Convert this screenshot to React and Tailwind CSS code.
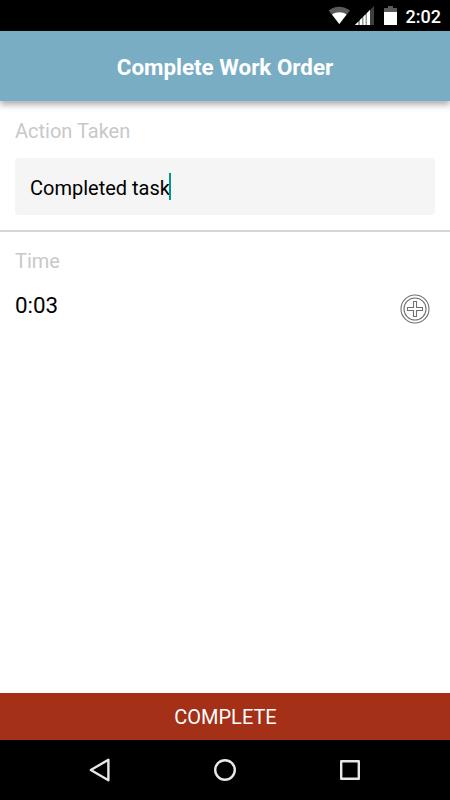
function StatusBar() {
  return (
    <div className="flex h-[31px] shrink-0 items-center bg-black pl-[328px] pr-[10px]">
      <svg width="22" height="31" viewBox="0 0 22 31" className="shrink-0">
        <path d="M0.6 10.5C6.5 5.4 15.5 5.4 22 10.5L11.3 24Z" fill="#5a5a5a" />
        <path d="M4 14.6C8 11.4 14.6 11.4 18.6 14.6L11.3 24Z" fill="#fff" />
      </svg>
      <svg width="20" height="31" viewBox="0 0 20 31" className="ml-[5px] shrink-0">
        <path d="M0 25L19 6V25Z" fill="#3f3f3f" />
        <path d="M0 25L15 10V25Z" fill="#999" />
        <path d="M0 25L3 22V25ZM5 20L7 18V25H5ZM8.5 16.5L10.5 14.5V25H8.5ZM12 13L15 10V25H12Z" fill="#fff" />
      </svg>
      <svg width="13" height="31" viewBox="0 0 13 31" className="ml-[9px] shrink-0">
        <path d="M4 6H9V8H13V12H0V8H4Z" fill="#5a5a5a" />
        <path d="M0 12H13V25H0Z" fill="#fff" />
      </svg>
      <span className="ml-[8.5px] mt-[2px] text-[18px] font-medium leading-none text-white">2:02</span>
    </div>
  );
}

function Header() {
  return (
    <header className="relative z-10 flex h-[70px] shrink-0 items-center justify-center bg-[#78adc4] shadow-[0_4px_6px_rgba(0,0,0,0.3)]">
      <h1 className="mt-px text-[22.4px] font-bold leading-[26px] text-white">Complete Work Order</h1>
    </header>
  );
}

function AddTimeButton() {
  return (
    <button className="size-[30px]">
      <svg width="30" height="30" viewBox="0 0 30 30" fill="none" stroke="#707070" strokeWidth="1.1">
        <circle cx="15" cy="15" r="14" />
        <circle cx="15" cy="15" r="11" />
        <path d="M13.5 7.5H16.5V13.5H22.5V16.5H16.5V22.5H13.5V16.5H7.5V13.5H13.5Z" />
      </svg>
    </button>
  );
}

function NavBar() {
  return (
    <nav className="flex h-[60px] shrink-0 items-center justify-between bg-black px-[85px]">
      <svg width="30" height="30" viewBox="0 0 30 30" fill="none" stroke="#e8e8e8" strokeWidth="2.4" strokeLinejoin="round">
        <path d="M5.8 15L23.4 4.8V25.2Z" />
      </svg>
      <svg width="30" height="30" viewBox="0 0 30 30" fill="none" stroke="#e8e8e8" strokeWidth="2.4">
        <circle cx="15" cy="15" r="9.8" />
      </svg>
      <svg width="30" height="30" viewBox="0 0 30 30" fill="none" stroke="#e8e8e8" strokeWidth="2.4" strokeLinejoin="round">
        <path d="M6.2 6.2H23.8V23.8H6.2Z" />
      </svg>
    </nav>
  );
}

export default function App() {
  return (
    <div className="flex h-[800px] w-[450px] flex-col overflow-hidden bg-white font-['Roboto',sans-serif]">
      <StatusBar />
      <Header />
      <main className="flex flex-1 flex-col">
        <section className="h-[131px] border-b-2 border-[#d5d5d5] px-[15px] pt-[18px]">
          <label className="block text-[20px] leading-6 text-[#c8c8c8]">Action Taken</label>
          <div className="mt-[15px] flex h-[57px] items-center rounded bg-[#f5f5f5] pl-[15px]">
            <span className="mt-[2px] text-[20px] leading-6 text-black">Completed task</span>
            <span className="-ml-[1px] h-[27px] w-[2px] bg-[#009688]" />
          </div>
        </section>
        <section className="px-[15px] pt-[17px]">
          <label className="block text-[20px] leading-6 text-[#c8c8c8]">Time</label>
          <div className="mt-[21px] flex items-start justify-between pr-[5px]">
            <span className="-mt-[2px] text-[22.4px] leading-[27px] text-black">0:03</span>
            <AddTimeButton />
          </div>
        </section>
      </main>
      <button className="h-[47px] shrink-0 bg-[#a43018] pl-px pt-px text-[20px] text-white">COMPLETE</button>
      <NavBar />
    </div>
  );
}
